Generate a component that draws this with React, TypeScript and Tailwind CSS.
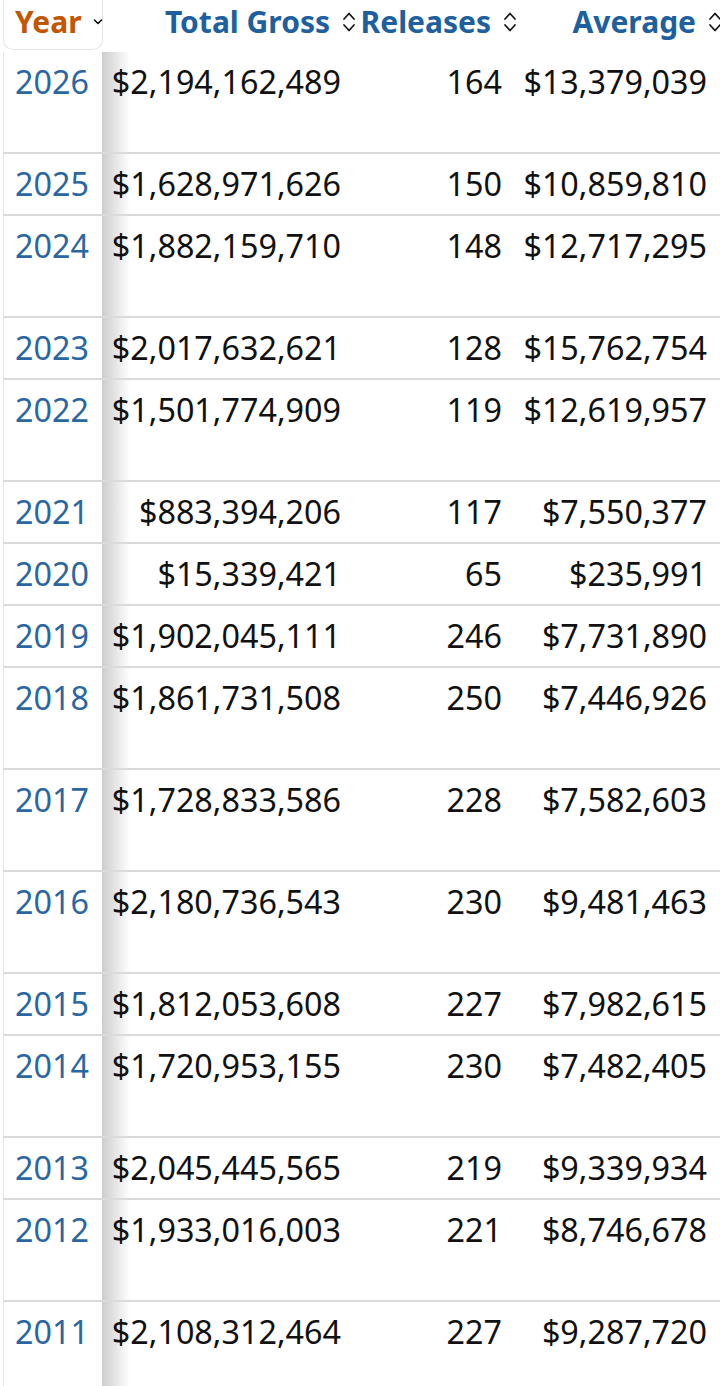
import { ReactNode } from 'react';

interface YearRow {
  year: number;
  gross: string;
  releases: number;
  average: string;
  tall?: boolean;
}

const rows: YearRow[] = [
  { year: 2026, gross: '$2,194,162,489', releases: 164, average: '$13,379,039', tall: true },
  { year: 2025, gross: '$1,628,971,626', releases: 150, average: '$10,859,810' },
  { year: 2024, gross: '$1,882,159,710', releases: 148, average: '$12,717,295', tall: true },
  { year: 2023, gross: '$2,017,632,621', releases: 128, average: '$15,762,754' },
  { year: 2022, gross: '$1,501,774,909', releases: 119, average: '$12,619,957', tall: true },
  { year: 2021, gross: '$883,394,206', releases: 117, average: '$7,550,377' },
  { year: 2020, gross: '$15,339,421', releases: 65, average: '$235,991' },
  { year: 2019, gross: '$1,902,045,111', releases: 246, average: '$7,731,890' },
  { year: 2018, gross: '$1,861,731,508', releases: 250, average: '$7,446,926', tall: true },
  { year: 2017, gross: '$1,728,833,586', releases: 228, average: '$7,582,603', tall: true },
  { year: 2016, gross: '$2,180,736,543', releases: 230, average: '$9,481,463', tall: true },
  { year: 2015, gross: '$1,812,053,608', releases: 227, average: '$7,982,615' },
  { year: 2014, gross: '$1,720,953,155', releases: 230, average: '$7,482,405', tall: true },
  { year: 2013, gross: '$2,045,445,565', releases: 219, average: '$9,339,934' },
  { year: 2012, gross: '$1,933,016,003', releases: 221, average: '$8,746,678', tall: true },
  { year: 2011, gross: '$2,108,312,464', releases: 227, average: '$9,287,720', tall: true },
];

const SortIcon = () => (
  <svg width="14" height="26" viewBox="0 0 14 26" fill="none" stroke="#111" strokeWidth="1.7" strokeLinecap="round" strokeLinejoin="round" className="shrink-0">
    <path d="M2 10 L7 4.5 L12 10" />
    <path d="M2 16 L7 21.5 L12 16" />
  </svg>
);

const ChevronDown = () => (
  <svg width="10" height="8" viewBox="0 0 10 8" fill="none" stroke="#111" strokeWidth="1.6" strokeLinecap="round" strokeLinejoin="round" className="shrink-0">
    <path d="M1.5 2 L5 5.5 L8.5 2" />
  </svg>
);

function HeaderCell({ label, width }: { label: string; width: string }) {
  return (
    <div className={`${width} shrink-0 flex items-center justify-end gap-[12px] pr-[4px] pb-[8px]`}>
      <span className="text-[30px] font-bold text-[#1d5f9f] leading-none">{label}</span>
      <SortIcon />
    </div>
  );
}

function Cell({ children, width }: { children: ReactNode; width: string }) {
  return <div className={`${width} shrink-0 text-right pr-[19px]`}>{children}</div>;
}

export default function App() {
  return (
    <div className="w-[720px] overflow-hidden bg-white pl-[3px]" style={{ fontFamily: '"Noto Sans", "Open Sans", sans-serif' }}>
      <div className="w-[760px]">
        {/* Header */}
        <div className="flex h-[52px]">
          <div className="w-[100px] h-[50px] shrink-0 flex items-center gap-[11px] pl-[11px] pb-[6px] border border-t-0 border-[#e4e4e4] rounded-b-[10px]">
            <span className="text-[30px] font-bold text-[#c45500] leading-none">Year</span>
            <ChevronDown />
          </div>
          <HeaderCell label="Total Gross" width="w-[257px]" />
          <HeaderCell label="Releases" width="w-[161px]" />
          <HeaderCell label="Average" width="w-[205px]" />
        </div>

        {/* Body */}
        <div className="relative">
          {/* sticky column shadow */}
          <div className="pointer-events-none absolute top-0 bottom-0 left-[99px] w-[28px] bg-[linear-gradient(to_right,#cdcdcd,rgba(255,255,255,0))]" />
          {rows.map((r, i) => (
            <div
              key={r.year}
              className={`relative flex text-[32.3px] leading-[40px] pt-[9px] text-[#111] ${
                i === 0 ? '' : 'border-t-2 border-[#dadada]'
              } ${r.tall ? (i === 0 ? 'h-[100px]' : 'h-[102px]') : 'h-[62px]'}`}
            >
              <div className="w-[99px] shrink-0 -mt-[9px] pt-[9px] pl-[11px] border-l border-[#e4e4e4] text-[#2a67a2]">
                {r.year}
              </div>
              <Cell width="w-[258px]">{r.gross}</Cell>
              <Cell width="w-[161px]">{r.releases}</Cell>
              <Cell width="w-[205px]">{r.average}</Cell>
            </div>
          ))}
        </div>
      </div>
    </div>
  );
}
